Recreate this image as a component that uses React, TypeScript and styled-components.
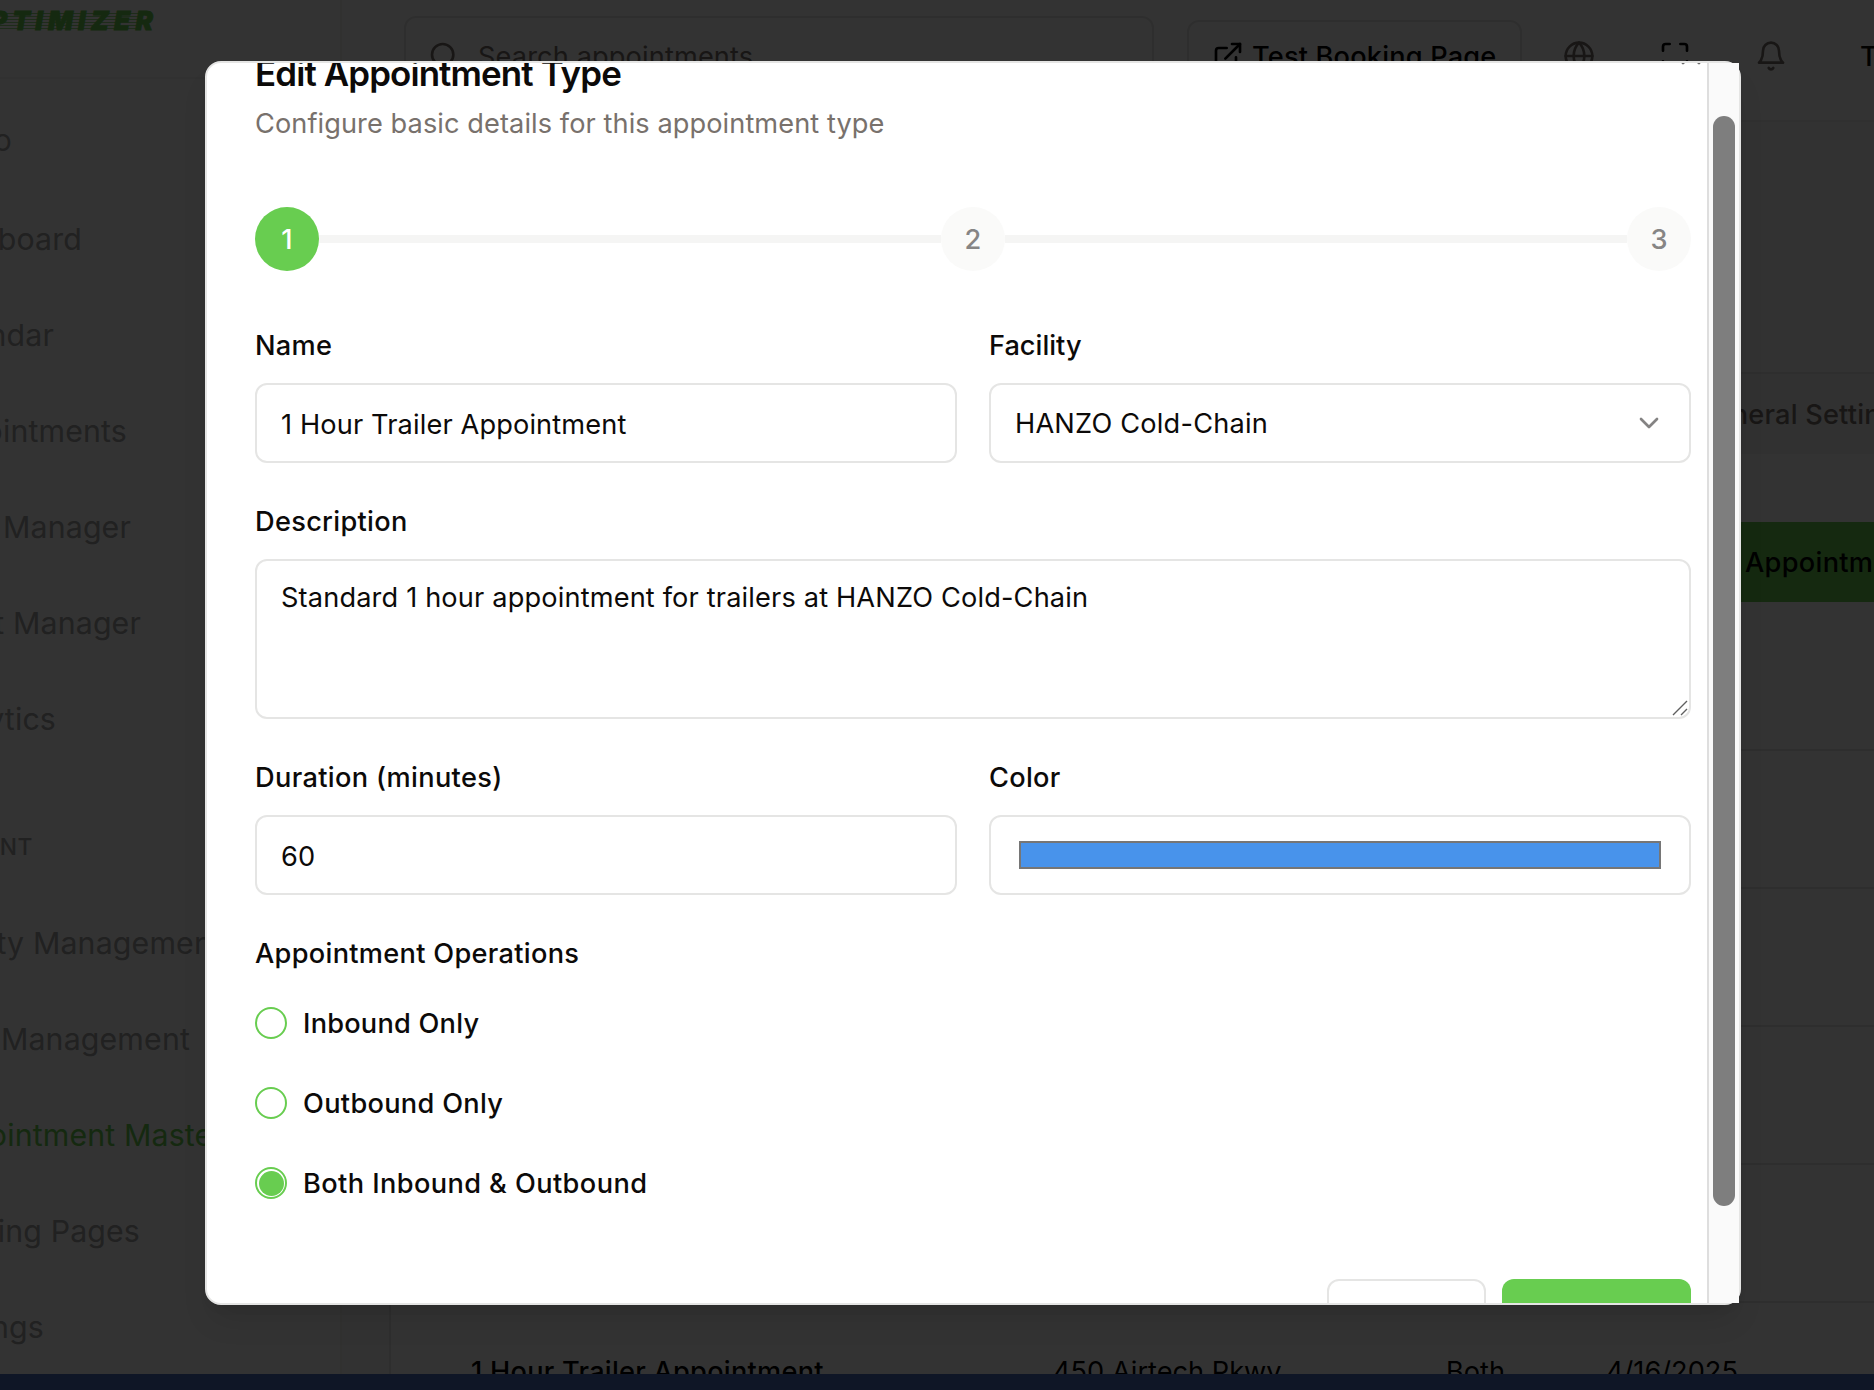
import React from "react";
import styled, { createGlobalStyle, css } from "styled-components";
import { ChevronDown, ExternalLink, Globe, Maximize, Search, X } from "lucide-react";

const green = "#68cd50";
const ink = "#0c0a09";
const muted = "#78716c";
const line = "#e5e5e4";

const GlobalStyle = createGlobalStyle`
  *, *::before, *::after { box-sizing: border-box; }
  html, body { margin: 0; padding: 0; }
  body {
    width: 1874px;
    height: 1390px;
    overflow: hidden;
    background: #0f1626;
    color: ${ink};
    font-family: Inter, "Liberation Sans", sans-serif;
    font-size: 27.2px;
    letter-spacing: 0.2px;
    -webkit-font-smoothing: antialiased;
  }
`;

/* ---------- page behind the dialog ---------- */

const Screen = styled.div`
  position: relative;
  width: 1874px;
  height: 1374px;
  overflow: hidden;
  display: flex;
  background: #fff;
`;

const Sidebar = styled.aside`
  width: 342px;
  flex: none;
  border-right: 2px solid #f2f2f1;
  display: flex;
  flex-direction: column;
`;

const Brand = styled.div`
  height: 79px;
  flex: none;
  border-bottom: 2px solid #f3f3f2;
`;

const Logo = styled.div`
  width: 158px;
  margin-top: 6px;
  height: 30px;
  display: flex;
  justify-content: flex-end;
  font-size: 26px;
  line-height: 30px;
  font-weight: 900;
  font-style: italic;
  letter-spacing: 5.2px;
  color: ${green};
  -webkit-text-stroke: 0.8px ${green};
  white-space: nowrap;
  background: repeating-linear-gradient(rgba(104, 205, 80, 0.7) 0 1.5px, transparent 1.5px 3px) 0 7px / 140px 17px
    no-repeat;
`;

const NavHeading = styled.div<{ $end: number; $height: number; $drop: number }>`
  width: ${(p) => p.$end}px;
  height: ${(p) => p.$height}px;
  padding-top: ${(p) => p.$drop}px;
  flex: none;
  display: flex;
  align-items: center;
  justify-content: flex-end;
  white-space: nowrap;
  font-size: 22.8px;
  font-weight: 500;
  letter-spacing: 0.6px;
  color: #a3a3a3;
`;

const NavItem = styled.a<{ $end: number; $active?: boolean }>`
  width: ${(p) => p.$end}px;
  height: 96px;
  flex: none;
  display: flex;
  align-items: center;
  justify-content: flex-end;
  white-space: pre;
  font-size: 30.3px;
  letter-spacing: 0.15px;
  color: ${(p) => (p.$active ? green : "#a3a3a3")};
`;

const Main = styled.main`
  flex: 1;
  min-width: 0;
  display: flex;
  flex-direction: column;
  background: #f8f8f7;
`;

const TopBar = styled.header`
  height: 122px;
  flex: none;
  display: flex;
  align-items: flex-start;
  padding: 16px 0 0 62px;
  background: #fff;
  border-bottom: 2px solid #eeeeed;
`;

const SearchBox = styled.div`
  width: 750px;
  flex: none;
  height: 80px;
  display: flex;
  align-items: center;
  gap: 18px;
  padding-left: 22px;
  border: 2px solid ${line};
  border-radius: 12px;
  color: ${muted};
  letter-spacing: 0.12px;
`;

const TestButton = styled.button`
  width: 335px;
  flex: none;
  height: 72px;
  margin: 4px 0 0 33px;
  display: flex;
  align-items: center;
  gap: 8px;
  padding: 0 0 0 23px;
  border: 2px solid ${line};
  border-radius: 12px;
  background: #fff;
  color: #000;
  font: inherit;
  font-weight: 500;
  letter-spacing: 0.17px;
  white-space: nowrap;
`;

const IconSlot = styled.span<{ $gap: number; $dark?: boolean }>`
  height: 80px;
  margin-left: ${(p) => p.$gap}px;
  display: flex;
  align-items: center;
  color: ${(p) => (p.$dark ? "#000" : muted)};
`;

const UserName = styled.span`
  height: 80px;
  margin-left: 73px;
  display: flex;
  align-items: center;
  font-weight: 500;
  white-space: nowrap;
`;

const Card = styled.section`
  margin: 250px 0 0 47px;
  width: 1600px;
  flex: none;
  border: 2px solid ${line};
  background: #fff;
`;

const TabStrip = styled.div`
  height: 80px;
  padding-left: 1304px;
  display: flex;
  align-items: center;
  background: #f5f5f4;
  color: ${muted};
  font-weight: 500;
  white-space: nowrap;
`;

const CardActions = styled.div`
  height: 297px;
  padding: 68px 0 0 1200px;
  border-bottom: 2px solid ${line};
`;

const AddButton = styled.button`
  width: 400px;
  height: 80px;
  padding: 0 0 0 154px;
  border: 0;
  background: ${green};
  color: #000;
  font: inherit;
  font-weight: 500;
  letter-spacing: 0.3px;
  text-align: left;
  white-space: nowrap;
`;

const TableRow = styled.div`
  height: 138px;
  display: grid;
  grid-template-columns: 582px 393px 160px 1fr;
  align-items: center;
  padding-left: 80px;
  border-bottom: 2px solid ${line};
  white-space: nowrap;
  color: #000;
  letter-spacing: 0;
`;

const Strong = styled.span`
  font-weight: 500;
  letter-spacing: 0.25px;
`;

const Overlay = styled.div`
  position: absolute;
  inset: 0;
  background: rgba(0, 0, 0, 0.8);
`;

/* ---------- dialog ---------- */

const Dialog = styled.div`
  position: absolute;
  left: 205px;
  top: 61px;
  width: 1536px;
  height: 1244px;
  border: 2px solid ${line};
  border-radius: 16px;
  background: #fff;
  box-shadow: 0 20px 30px -6px rgba(0, 0, 0, 0.1), 0 8px 12px -8px rgba(0, 0, 0, 0.1);
  display: flex;
`;

const Viewport = styled.div`
  position: relative;
  flex: 1;
  min-width: 0;
  height: 1240px;
  padding: 0 16px 0 48px;
  overflow: hidden;
`;

const Content = styled.div`
  margin-top: -8px;
  display: flex;
  flex-direction: column;
`;

const Title = styled.h2`
  margin: 0;
  height: 36px;
  line-height: 36px;
  font-size: 34.9px;
  font-weight: 600;
  letter-spacing: -0.88px;
`;

const Subtitle = styled.p`
  margin: 13px 0 63px;
  height: 40px;
  line-height: 40px;
  color: ${muted};
  letter-spacing: 0.07px;
`;

const CloseButton = styled.span`
  position: absolute;
  right: 0;
  top: -24px;
  height: 32px;
  color: #6b6b6b;
`;

const Stepper = styled.div`
  display: flex;
  align-items: center;
  margin-bottom: 60px;
`;

const Step = styled.div<{ $current?: boolean }>`
  width: 64px;
  height: 64px;
  flex: none;
  display: flex;
  align-items: center;
  justify-content: center;
  border-radius: 50%;
  font-weight: 500;
  background: ${(p) => (p.$current ? green : "#fafaf9")};
  color: ${(p) => (p.$current ? "#fff" : "#868585")};
`;

const StepLine = styled.div`
  flex: 1;
  height: 8px;
  background: #f5f5f4;
`;

const Form = styled.div`
  display: flex;
  flex-direction: column;
  gap: 44px;
`;

const Pair = styled.div`
  display: grid;
  grid-template-columns: 1fr 1fr;
  gap: 32px;
`;

const Field = styled.div`
  display: flex;
  flex-direction: column;
  gap: 24px;
`;

const Label = styled.label<{ $tracking?: number }>`
  height: 28px;
  line-height: 30px;
  font-weight: 500;
  letter-spacing: ${(p) => p.$tracking ?? 0.3}px;
  white-space: nowrap;
`;

const control = css`
  border: 2px solid ${line};
  border-radius: 12px;
  background: #fff;
`;

const Input = styled.div`
  ${control}
  height: 80px;
  padding: 2px 24px 0;
  display: flex;
  align-items: center;
  letter-spacing: 0.13px;
`;

const Select = styled.div`
  ${control}
  height: 80px;
  padding: 0 24px;
  display: flex;
  align-items: center;
  justify-content: space-between;
  letter-spacing: 0.2px;

  svg {
    opacity: 0.5;
  }
`;

const TextArea = styled.div`
  ${control}
  position: relative;
  height: 160px;
  padding: 17px 24px 15px;
  line-height: 40px;
  letter-spacing: 0.15px;
`;

const ResizeHandle = styled.svg`
  position: absolute;
  right: 1px;
  bottom: 1px;
`;

const ColorInput = styled.div`
  ${control}
  height: 80px;
  padding: 24px 28px;
`;

const Swatch = styled.div`
  height: 28px;
  border: 2px solid #767676;
  background: #4893eb;
`;

const RadioGroup = styled.div`
  margin-top: 40px;
  display: flex;
  flex-direction: column;
  gap: 48px;
`;

const RadioRow = styled.div`
  height: 32px;
  display: flex;
  align-items: center;
  gap: 16px;
`;

const Radio = styled.span`
  width: 32px;
  height: 32px;
  display: flex;
  align-items: center;
  justify-content: center;
  border: 2px solid ${green};
  border-radius: 50%;
`;

const RadioDot = styled.span`
  width: 25px;
  height: 25px;
  border-radius: 50%;
  background: ${green};
`;

const Footer = styled.div`
  margin-top: 80px;
  display: flex;
  justify-content: flex-end;
  gap: 16px;
`;

const FooterButton = styled.button<{ $primary?: boolean }>`
  width: ${(p) => (p.$primary ? 189 : 159)}px;
  height: 80px;
  flex: none;
  border: ${(p) => (p.$primary ? "0" : `2px solid ${line}`)};
  border-radius: 12px;
  background: ${(p) => (p.$primary ? green : "#fff")};
`;

const ScrollTrack = styled.div`
  width: 32px;
  flex: none;
  padding: 53px 4px 0;
  border-left: 2px solid #dedede;
  background: #fafafa;
`;

const ScrollThumb = styled.div`
  width: 22px;
  height: 1090px;
  border-radius: 11px;
  background: #7e7e7e;
`;

function BellIcon() {
  return (
    <svg width="32" height="32" viewBox="0 0 24 24" fill="none" stroke="currentColor" strokeWidth="2" strokeLinecap="round" strokeLinejoin="round">
      <path d="M6 8a6 6 0 0 1 12 0c0 7 3 9 3 9H3s3-2 3-9" />
      <path d="M10.3 21a1.94 1.94 0 0 0 3.4 0" />
    </svg>
  );
}

const planning = [
  { label: "Dashboard", end: 82 },
  { label: "Calendar", end: 54 },
  { label: "Appointments", end: 127 },
  { label: "Manager", end: 131 },
  { label: "t Manager", end: 141 },
  { label: "Analytics", end: 56 },
];

const management = [
  { label: "Facility Management", end: 222 },
  { label: "Management", end: 190 },
  { label: "Appointment Master", end: 224, active: true },
  { label: "Booking Pages", end: 140 },
  { label: "Settings", end: 44 },
];

const operations = [
  { name: "Inbound Only", tracking: 0.22 },
  { name: "Outbound Only", tracking: 0.3 },
  { name: "Both Inbound & Outbound", tracking: 0.4, checked: true },
];

export default function App() {
  return (
    <>
      <GlobalStyle />
      <Screen>
        <Sidebar>
          <Brand>
            <Logo>OPTIMIZER</Logo>
          </Brand>
          <NavHeading $end={12} $height={112} $drop={14}>O</NavHeading>
          {planning.map((item) => (
            <NavItem key={item.label} $end={item.end}>{item.label}</NavItem>
          ))}
          <NavHeading $end={33} $height={128} $drop={30}>MANAGEMENT</NavHeading>
          {management.map((item) => (
            <NavItem key={item.label} $end={item.end} $active={item.active}>{item.label}</NavItem>
          ))}
        </Sidebar>

        <Main>
          <TopBar>
            <SearchBox>
              <Search size={32} />
              Search appointments...
            </SearchBox>
            <TestButton>
              <ExternalLink size={32} />
              Test Booking Page
            </TestButton>
            <IconSlot $gap={41}><Globe size={32} /></IconSlot>
            <IconSlot $gap={64} $dark><Maximize size={32} /></IconSlot>
            <IconSlot $gap={64}><BellIcon /></IconSlot>
            <UserName>T</UserName>
          </TopBar>
          <Card>
            <TabStrip>General Settings</TabStrip>
            <CardActions>
              <AddButton>Appointment</AddButton>
            </CardActions>
            <TableRow />
            <TableRow />
            <TableRow />
            <TableRow />
            <TableRow>
              <Strong>1 Hour Trailer Appointment</Strong>
              <span>450 Airtech Pkwy</span>
              <span>Both</span>
              <span>4/16/2025</span>
            </TableRow>
          </Card>
        </Main>

        <Overlay />

        <Dialog role="dialog">
          <Viewport>
            <CloseButton><X size={32} /></CloseButton>
            <Content>
              <Title>Edit Appointment Type</Title>
              <Subtitle>Configure basic details for this appointment type</Subtitle>
              <Stepper>
                <Step $current>1</Step>
                <StepLine />
                <Step>2</Step>
                <StepLine />
                <Step>3</Step>
              </Stepper>
              <Form>
                <Pair>
                  <Field>
                    <Label>Name</Label>
                    <Input>1 Hour Trailer Appointment</Input>
                  </Field>
                  <Field>
                    <Label $tracking={0}>Facility</Label>
                    <Select>
                      HANZO Cold-Chain
                      <ChevronDown size={32} />
                    </Select>
                  </Field>
                </Pair>
                <Field>
                  <Label>Description</Label>
                  <TextArea>
                    Standard 1 hour appointment for trailers at HANZO Cold-Chain
                    <ResizeHandle width="16" height="16" viewBox="0 0 16 16" fill="none" stroke="#5f5f5f" strokeWidth="1.4">
                      <path d="M1 15L15 1M9 15L15 9" />
                    </ResizeHandle>
                  </TextArea>
                </Field>
                <Pair>
                  <Field>
                    <Label $tracking={0.34}>Duration (minutes)</Label>
                    <Input>60</Input>
                  </Field>
                  <Field>
                    <Label>Color</Label>
                    <ColorInput><Swatch /></ColorInput>
                  </Field>
                </Pair>
                <Label>Appointment Operations</Label>
              </Form>
              <RadioGroup>
                {operations.map((op) => (
                  <RadioRow key={op.name}>
                    <Radio>{op.checked && <RadioDot />}</Radio>
                    <Label $tracking={op.tracking}>{op.name}</Label>
                  </RadioRow>
                ))}
              </RadioGroup>
              <Footer>
                <FooterButton aria-label="Cancel" />
                <FooterButton aria-label="Next" $primary />
              </Footer>
            </Content>
          </Viewport>
          <ScrollTrack>
            <ScrollThumb />
          </ScrollTrack>
        </Dialog>
      </Screen>
    </>
  );
}
